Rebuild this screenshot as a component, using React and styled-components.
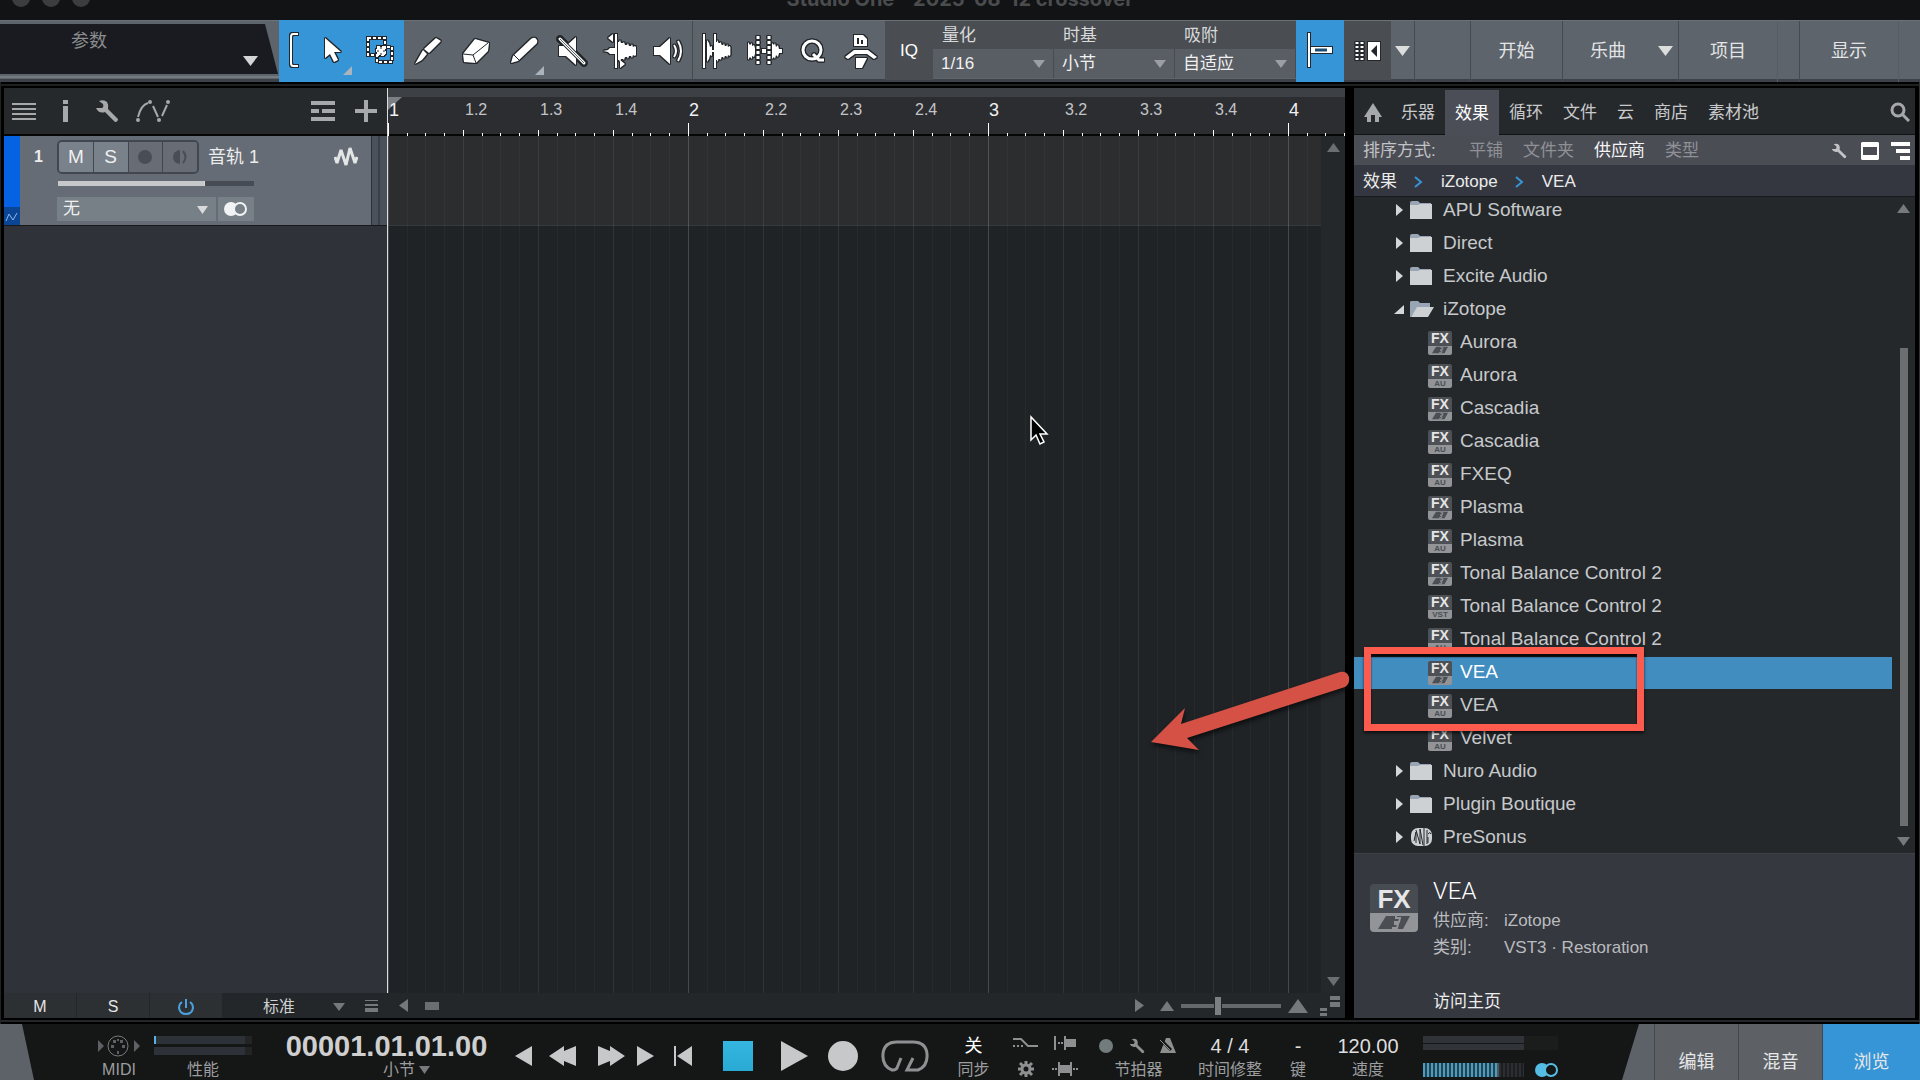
import React from "react";
import styled, { createGlobalStyle, css } from "styled-components";

const blue = "#3595d6";

const GlobalStyle = createGlobalStyle`
  * { box-sizing: border-box; }
  body {
    margin: 0;
    background: #0b0c0d;
    color: #d2d3d5;
    font: 17px/20px "Liberation Sans", "Noto Sans CJK SC", sans-serif;
    overflow: hidden;
  }
  button, select, input {
    font: inherit;
    color: inherit;
    margin: 0;
    padding: 0;
    border: 0;
    border-radius: 0;
    background: none;
    appearance: none;
    outline: none;
  }
  a { color: inherit; text-decoration: none; }
  ul, dl, dd { margin: 0; padding: 0; list-style: none; }
  svg { display: block; flex: none; }
`;

const Window = styled.div`
  display: flex;
  flex-direction: column;
  height: 100vh;
`;

/* ---------- title bar ---------- */
const TitleBar = styled.header`
  display: flex;
  height: 20px;
  flex: none;
  background: #121315;
  overflow: hidden;
  position: relative;
`;
const Lights = styled.div`
  display: flex;
  gap: 12px;
  padding-left: 12px;
  margin-top: -11px;
`;
const Light = styled.span`
  width: 18px;
  height: 18px;
  border-radius: 50%;
  background: #3c3d3f;
`;
const Title = styled.h1`
  position: absolute;
  left: 50%;
  top: -13px;
  transform: translateX(-50%);
  margin: 0;
  font: 700 20px/24px Inter, sans-serif;
  color: #4b4c4e;
  white-space: nowrap;
`;

/* ---------- toolbar ---------- */
const Toolbar = styled.div`
  display: flex;
  height: 62px;
  flex: none;
  background: linear-gradient(#5d646b 58px, #3d4248 58px);
  border-top: 1px solid #6b7176;
`;
const ParamBox = styled.div`
  width: 279px;
  height: 57px;
  padding: 3px 0 2px;
  border-bottom: 2px solid #757b81;
  flex: none;
`;
const ParamScreen = styled.button`
  position: relative;
  display: block;
  width: 278px;
  height: 50px;
  padding: 0 0 16px 71px;
  text-align: left;
  font-size: 18px;
  color: #8b8c8e;
  background: #191b20;
  clip-path: polygon(0 0, 265px 0, 278px 100%, 0 100%);
`;
const ParamCaret = styled.span`
  position: absolute;
  right: 20px;
  bottom: 8px;
`;
const Tool = styled.button`
  position: relative;
  width: ${(p) => p.$w || 48}px;
  height: ${(p) => (p.$on ? 62 : 59)}px;
  padding-bottom: ${(p) => (p.$on ? 2 : 0)}px;
  margin-top: ${(p) => (p.$on ? -1 : 0)}px;
  display: flex;
  align-items: center;
  justify-content: center;
  flex: none;
  background: ${(p) => (p.$on ? blue : p.$dark ? "#4a4e52" : "none")};
  color: #fff;
  > svg:first-child {
    filter: drop-shadow(1px 0 0 #23272b) drop-shadow(-1px 0 0 #23272b)
      drop-shadow(0 1px 0 #23272b) drop-shadow(0 -1px 0 #23272b);
  }
`;
const Corner = styled.span`
  position: absolute;
  right: 4px;
  bottom: ${(p) => (p.$on ? 7 : 5)}px;
  width: 9px;
  height: 9px;
  background: #a9b4bd;
  clip-path: polygon(100% 0, 100% 100%, 0 100%);
`;
const Divider = styled.span`
  width: 1px;
  height: 61px;
  flex: none;
  background: #454a50;
`;
const Field = styled.label`
  position: relative;
  flex: none;
  width: 121px;
  height: 57px;
  display: flex;
  flex-direction: column;
  background: #4a4e52;
  color: #d8d9da;
`;
const FieldName = styled.span`
  height: 28px;
  padding: 5px 0 0 9px;
`;
const FieldSelect = styled.select`
  height: 29px;
  padding-left: 8px;
  padding-top: 1px;
  background: #595d64;
  border-right: 1px solid #484c52;
  color: #f1f1f2;
`;
const FieldCaret = styled.span`
  position: absolute;
  right: 9px;
  bottom: 10px;
`;
const Filler = styled.span`
  flex: 1;
`;
const PageButton = styled.button`
  width: ${(p) => p.$w}px;
  height: 60px;
  flex: none;
  font-size: 18px;
  color: #e3e4e5;
  display: flex;
  align-items: center;
  justify-content: center;
`;
const Gap = styled.span`
  width: ${(p) => p.$w}px;
  height: 61px;
  flex: none;
  border-left: 1px solid #565d64;
`;

/* ---------- workspace ---------- */
const Workspace = styled.main`
  flex: 1;
  min-height: 0;
  display: flex;
  gap: 9px;
  padding: 6px 4px 6px 3px;
  border-left: 1px solid #202224;
  border-right: 1px solid #303234;
  background: linear-gradient(#000 2px, #1d1f21 2px 4px, #000 4px, #000 calc(100% - 4px), #24272a calc(100% - 4px), #24272a calc(100% - 2px), #000 calc(100% - 2px));
`;
const Arrange = styled.section`
  flex: 1;
  min-width: 0;
  display: flex;
  flex-direction: column;
`;
const ArrangeBody = styled.div`
  flex: 1;
  min-height: 0;
  display: flex;
`;
const TrackColumn = styled.div`
  width: 383px;
  flex: none;
  background: #2f3238;
`;
const TrackHeader = styled.div`
  display: flex;
  align-items: center;
  height: 48px;
  padding: 0 0 0 8px;
  background: #26292c;
  border-bottom: 2px solid #060607;
  color: #a6a8aa;
`;
const IconButton = styled.button`
  display: flex;
  align-items: center;
  justify-content: center;
  flex: none;
  width: ${(p) => p.$w}px;
  height: ${(p) => p.$h || 24}px;
`;
const Track = styled.div`
  display: flex;
  height: 90px;
  background: #656c75;
  border-bottom: 1px solid #17191b;
`;
const TrackColor = styled.div`
  width: 16px;
  background: linear-gradient(#0562e2 71px, #0b4596 71px);
  display: flex;
  align-items: flex-end;
  padding: 0 0 3px 1px;
`;
const TrackNumber = styled.span`
  width: 37px;
  padding-top: 11px;
  text-align: center;
  font-weight: 700;
  font-size: 16px;
  color: #ececed;
`;
const TrackBody = styled.div`
  flex: 1;
  padding-top: 4px;
`;
const TrackTop = styled.div`
  display: flex;
  align-items: center;
  height: 34px;
`;
const Toggles = styled.div`
  display: flex;
  width: 142px;
  height: 34px;
  border: 2px solid #42474f;
  border-radius: 5px;
  overflow: hidden;
`;
const Toggle = styled.button`
  flex: 1;
  display: flex;
  align-items: center;
  justify-content: center;
  font-size: 19px;
  color: #eff0f1;
  background: ${(p) => (p.$dim ? "#686d75" : "#79818a")};
  & + & { border-left: 1px solid #42474f; }
`;
const TrackName = styled.span`
  margin-left: 9px;
  flex: 1;
  font-size: 18px;
  color: #ececed;
`;
const Volume = styled.input`
  display: block;
  width: 196px;
  height: 5px;
  margin: 7px 0 11px 1px;
  background: linear-gradient(90deg, #c6c8ca 75%, #464b54 75%);
  &::-webkit-slider-thumb { appearance: none; width: 1px; height: 5px; background: #d6d7d8; }
`;
const TrackInputs = styled.div`
  display: flex;
  gap: 2px;
`;
const InputField = styled.label`
  position: relative;
  display: flex;
  width: 159px;
  height: 24px;
`;
const InputSelect = styled.select`
  flex: 1;
  padding-left: 6px;
  background: #777f87;
  color: #f0f0f1;
`;
const InputCaret = styled.span`
  position: absolute;
  right: 8px;
  top: 9px;
`;
const StereoButton = styled.button`
  width: 36px;
  height: 24px;
  display: flex;
  align-items: center;
  justify-content: center;
  background: #777f87;
`;
const TrackMeter = styled.span`
  width: 16px;
  background: linear-gradient(90deg, #2c3139 1px, #4a515b 1px, #4a515b 7px, #39404a 7px, #39404a 9px, #4a515b 9px);
`;

/* ---------- timeline ---------- */
const Timeline = styled.div`
  flex: 1;
  min-width: 0;
  display: flex;
  flex-direction: column;
  border-left: 1px solid #dcdddd;
  background: #25282b;
`;
const Ruler = styled.div`
  position: relative;
  display: flex;
  flex: none;
  height: 48px;
  overflow: hidden;
  border-top: 9px solid #3d4146;
  background: #2c2d31;
`;
const StartFlag = styled.span`
  position: absolute;
  left: 0;
  top: 0;
  width: 14px;
  height: 13px;
  background: #7d8085;
  clip-path: polygon(0 0, 100% 0, 0 100%);
`;
const Beat = styled.span`
  position: relative;
  width: 75px;
  flex: none;
  padding: 3px 0 0 ${(p) => (p.$bar ? 1 : 2)}px;
  font-size: ${(p) => (p.$bar ? 18 : 16)}px;
  color: ${(p) => (p.$bar ? "#f0f0f1" : "#c3c4c6")};
  background:
    linear-gradient(#fff, #fff) 0 100% / 1px ${(p) => (p.$bar ? 13 : 6)}px no-repeat,
    linear-gradient(#fff, #fff) 19px 100% / 1px 3px no-repeat,
    linear-gradient(#fff, #fff) 37px 100% / 1px 3px no-repeat,
    linear-gradient(#fff, #fff) 56px 100% / 1px 3px no-repeat,
    linear-gradient(#060607, #060607) 0 100% / 100% 2px no-repeat;
`;
const Canvas = styled.div`
  flex: 1;
  min-height: 0;
  display: flex;
`;
const Lanes = styled.div`
  position: relative;
  flex: 1;
  background:
    linear-gradient(90deg, #ffffff1a 1px, transparent 1px) 0 0 / 300px 100%,
    linear-gradient(90deg, #ffffff14 1px, transparent 1px, transparent 19px, #ffffff08 19px, #ffffff08 20px, transparent 20px, transparent 37px, #ffffff08 37px, #ffffff08 38px, transparent 38px, transparent 56px, #ffffff08 56px, #ffffff08 57px, transparent 57px) 0 0 / 75px 100%,
    linear-gradient(#2c2d2f 89px, #36393b 89px, #36393b 90px, #1f2326 90px);
`;
const Pointer = styled.span`
  position: absolute;
  left: 641px;
  top: 279px;
`;
const ScrollRail = styled.div`
  width: 24px;
  display: flex;
  flex-direction: column;
  justify-content: space-between;
  align-items: center;
  padding: 7px 0;
  background: #25282b;
  color: #6c6f72;
`;
const ArrangeFooter = styled.div`
  display: flex;
  align-items: center;
  flex: none;
  height: 25px;
  background: #24272a;
  color: #76797c;
`;
const FooterButton = styled.button`
  width: 72px;
  height: 25px;
  padding-top: 2px;
  margin-right: 1px;
  display: flex;
  align-items: center;
  justify-content: center;
  font-size: 16px;
  color: #e4e4e5;
  background: #2d3033;
`;
const ModeField = styled.label`
  position: relative;
  display: flex;
  margin-left: 40px;
  width: 86px;
  padding-top: 2px;
`;
const ModeSelect = styled.select`
  flex: 1;
  font-size: 16px;
  color: #cfd0d2;
`;
const ModeCaret = styled.span`
  position: absolute;
  right: 4px;
  top: 8px;
`;
const HScrollThumb = styled.span`
  width: 14px;
  height: 8px;
  background: #6b6e71;
  margin-left: 12px;
`;
const ZoomSlider = styled.input`
  width: 100px;
  height: 18px;
  background: linear-gradient(#66696c, #66696c) 0 50% / 100% 4px no-repeat;
  &::-webkit-slider-thumb {
    appearance: none;
    width: 8px;
    height: 18px;
    background: #7c7f82;
    border: solid #24272a;
    border-width: 0 1px;
  }
`;

/* ---------- browser ---------- */
const Browser = styled.aside`
  position: relative;
  width: 561px;
  flex: none;
  display: flex;
  flex-direction: column;
  background: #24282b;
`;
const TabBar = styled.nav`
  display: flex;
  align-items: stretch;
  height: 47px;
  flex: none;
  padding: 2px 5px 0 3px;
  background: #26292c;
  border-bottom: 1px solid #111214;
  color: #a6a8aa;
`;
const Tab = styled.button`
  padding: 2px 10px 0;
  color: ${(p) => (p.$on ? "#fff" : "#c9cacc")};
  background: ${(p) => (p.$on ? "#4c4e57" : "none")};
  margin-bottom: ${(p) => (p.$on ? -1 : 0)}px;
  display: flex;
  align-items: center;
  justify-content: center;
`;
const SortBar = styled.div`
  display: flex;
  align-items: center;
  height: 30px;
  flex: none;
  padding: 1px 0 0 9px;
  background: #4b4d55;
  color: #c2c3c6;
`;
const SortLabel = styled.span`
  width: 96px;
`;
const SortButton = styled.button`
  padding: 0 10px;
  color: ${(p) => (p.$on ? "#f4f4f5" : "#8f9197")};
`;
const Crumbs = styled.nav`
  display: flex;
  align-items: center;
  gap: 16px;
  height: 32px;
  flex: none;
  padding: 2px 0 0 9px;
  background: #34373f;
  border-bottom: 1px solid #181a1d;
  color: #ebebec;
`;
const Chevron = styled.span`
  display: flex;
  width: 12px;
  color: ${blue};
`;
const TreeArea = styled.div`
  position: relative;
  flex: 1;
  min-height: 0;
  display: flex;
  overflow: hidden;
`;
const Tree = styled.ul`
  flex: 1;
  margin-top: -3px;
`;
const Row = styled.button`
  display: flex;
  align-items: center;
  width: 100%;
  height: 33px;
  padding-bottom: 2px;
  padding-left: ${(p) => (p.$child ? 74 : 40)}px;
  border-top: 1px solid transparent;
  background: ${(p) => (p.$on ? "#418dc0" : "none")};
  background-clip: padding-box;
  font-size: 19px;
  text-align: left;
  color: ${(p) => (p.$on ? "#fff" : "#c7c9cb")};
`;
const RowText = styled.span`
  margin-left: ${(p) => (p.$child ? 8 : 9)}px;
`;
const TreeScroll = styled.div`
  width: 23px;
  display: flex;
  flex-direction: column;
  align-items: center;
  padding: 7px 0;
  gap: 11px;
  color: #77797c;
`;
const TreeThumb = styled.span`
  width: 8px;
  flex: 1;
  margin-top: 124px;
  background: #6c6e70;
`;
const Highlight = styled.span`
  position: absolute;
  left: 10px;
  top: 450px;
  width: 280px;
  height: 84px;
  border: 7px solid #fd5b4d;
  box-shadow: 0 2px 3px #000a, inset 0 3px 2px #000c;
  pointer-events: none;
`;
const ArrowNote = styled.span`
  position: absolute;
  left: -214px;
  top: 572px;
  pointer-events: none;
  filter: drop-shadow(1px 3px 2px #0009);
`;
const Badge = styled.span`
  display: flex;
  flex-direction: column;
  flex: none;
  width: ${(p) => (p.$big ? 48 : 24)}px;
  height: ${(p) => (p.$big ? 48 : 24)}px;
  margin-top: ${(p) => (p.$big ? 0 : 1)}px;
  border-radius: ${(p) => (p.$big ? 4 : 2)}px;
  overflow: hidden;
  text-align: center;
  font-weight: 700;
`;
const BadgeTop = styled.span`
  flex: none;
  height: ${(p) => (p.$big ? 29 : 15)}px;
  background: ${(p) => (p.$big ? "#474b52" : "#4d5054")};
  color: #e6e6e7;
  font-size: ${(p) => (p.$big ? 26 : 14)}px;
  line-height: ${(p) => (p.$big ? 31 : 15)}px;
`;
const BadgeBottom = styled.span`
  flex: 1;
  display: flex;
  align-items: center;
  justify-content: center;
  background: #929498;
  color: #4b4e53;
  font-size: 8px;
  line-height: 9px;
`;
const Info = styled.div`
  display: flex;
  align-items: flex-start;
  gap: 15px;
  height: 165px;
  flex: none;
  padding: 30px 0 0 16px;
  background: #35383f;
  border-top: 1px solid #3d4047;
`;
const InfoTitle = styled.h2`
  margin: -6px 0 7px;
  font: 300 24px/26px Roboto, "Liberation Sans", sans-serif;
  color: #fff;
`;
const Facts = styled.dl`
  display: grid;
  grid-template-columns: 71px auto;
  row-gap: 7px;
  margin-bottom: 34px;
  color: #babbbe;
`;
const HomeLink = styled.a`
  color: #ececed;
`;

/* ---------- transport ---------- */
const Transport = styled.footer`
  display: flex;
  flex: none;
  height: 56px;
  background: #151616;
  color: #c9cacb;
`;
const LeftWedge = styled.span`
  width: 34px;
  flex: none;
  background: #5d6268;
  clip-path: polygon(0 0, 22px 0, 100% 100%, 0 100%);
`;
const Cell = styled.div`
  display: flex;
  flex-direction: column;
  align-items: center;
  flex: none;
  width: ${(p) => p.$w}px;
  margin-left: ${(p) => p.$ml || 0}px;
  padding-top: 7px;
`;
const CellTop = styled.div`
  height: 31px;
  width: 100%;
  display: flex;
  align-items: center;
  justify-content: center;
  font-size: ${(p) => (p.$size ? p.$size : 20)}px;
  font-weight: ${(p) => (p.$bold ? 700 : 400)};
  color: ${(p) => p.$color || "#dededf"};
`;
const CellLabel = styled.span`
  display: flex;
  align-items: center;
  gap: 4px;
  font-size: 16px;
  line-height: 20px;
  color: #9c9d9f;
  white-space: nowrap;
  padding-left: ${(p) => (p.$shift ? 40 : 0)}px;
`;
const Meters = styled.div`
  width: 98px;
  display: grid;
  gap: 3px;
`;
const Meter = styled.span`
  height: 8px;
  background: linear-gradient(90deg, ${(p) => (p.$on ? "#58b2df" : "#2d3238")} 2px, #2d3238 2px, #2d3238 91px, #232424 91px);
`;
const TransportButton = styled.button`
  display: flex;
  align-items: center;
  justify-content: center;
  flex: none;
  height: 56px;
  width: ${(p) => p.$w}px;
  padding-top: 8px;
  color: #c7c8c9;
  ${(p) => p.$loop && css`color: #8f9091;`}
`;
const StopSquare = styled.span`
  width: 30px;
  height: 30px;
  background: linear-gradient(#35b6e0, #29aad4);
`;
const IconGrid = styled.div`
  display: grid;
  grid-template-columns: 39px 39px;
  grid-template-rows: 24px 28px;
  justify-content: center;
  place-items: center;
  width: 90px;
  flex: none;
  padding-top: 7px;
  color: #8d8f91;
`;
const Trio = styled.div`
  display: grid;
  grid-template-columns: repeat(3, 31px);
  place-items: center;
  height: 31px;
  margin-right: 4px;
  color: #8d8f91;
`;
const Output = styled.div`
  display: flex;
  flex-direction: column;
  gap: 12px;
  width: 135px;
  flex: none;
  margin-left: 10px;
  padding-top: 12px;
`;
const OutputMeter = styled.span`
  height: 14px;
  background: linear-gradient(#151616, #151616) 0 50% / 101px 1px no-repeat, linear-gradient(90deg, #303338 101px, #1b1c1c 101px);
`;
const OutputRow = styled.div`
  display: flex;
  align-items: center;
  gap: 10px;
`;
const OutputLevel = styled.input`
  width: 101px;
  height: 14px;
  background:
    repeating-linear-gradient(90deg, transparent 0 2px, #151616aa 2px 4px),
    linear-gradient(90deg, #4a9cc0 74px, #b9dbe8 74px, #b9dbe8 76px, #2b2e32 76px);
  &::-webkit-slider-thumb { appearance: none; width: 1px; height: 14px; background: transparent; }
`;
const RightWedge = styled.span`
  width: 32px;
  flex: none;
  margin-left: auto;
  background: #5d6268;
  clip-path: polygon(17px 0, 100% 0, 100% 100%, 0 100%);
`;
const ViewButton = styled.button`
  width: ${(p) => (p.$on ? 98 : 84)}px;
  flex: none;
  padding-top: 20px;
  border-left: 1px solid #43474b;
  font-size: 18px;
  color: #e6e7e8;
  background: ${(p) => (p.$on ? blue : "#5d6166")};
`;

/* ---------- drawings ---------- */
const Svg = ({ w, h, children, ...rest }) => (
  <svg width={w} height={h} viewBox={`0 0 ${w} ${h}`} fill="currentColor" aria-hidden="true" {...rest}>
    {children}
  </svg>
);
const shapes = {
  down: (w, h) => `0,0 ${w},0 ${w / 2},${h}`,
  up: (w, h) => `0,${h} ${w},${h} ${w / 2},0`,
  left: (w, h) => `${w},0 ${w},${h} 0,${h / 2}`,
  right: (w, h) => `0,0 ${w},${h / 2} 0,${h}`,
};
const Tri = ({ d = "down", w = 12, h = 9, c = "currentColor" }) => (
  <Svg w={w} h={h}><polygon points={shapes[d](w, h)} fill={c} /></Svg>
);
const line = (sw = 2) => ({ fill: "none", stroke: "currentColor", strokeWidth: sw });

const wave = "M0 -9 L1 -9 2 -11 3 -8 5 -8 6 -9 7 -6 9 -6 10 -8 11 -5 13 -5 14 -7 15 -4 17 -5 18 -4 V4 L17 5 15 4 14 7 13 5 11 5 10 8 9 6 7 6 6 9 5 8 3 8 2 11 1 9 0 9Z";

const toolIcons = {
  bracket: <Svg w={14} h={36}><path d="M11 2H6Q4 2 4 5V31Q4 34 6 34H11" {...line(2)} /></Svg>,
  arrow: <Svg w={22} h={28}><path d="M3 2V22L8 18L12 26L16 24L12 16H19Z" /></Svg>,
  range: (
    <Svg w={30} h={30}>
      <rect x="3" y="3" width="17" height="17" {...line(2)} strokeDasharray="3 2" />
      <rect x="12" y="12" width="15" height="15" {...line(2)} strokeDasharray="3 2" />
      <path d="M12 12H20V20H12Z" />
      <path d="M16 12V14M16 18V20M12 16H14M18 16H20" stroke="#23272b" strokeWidth="1" />
    </Svg>
  ),
  knife: <Svg w={30} h={30}><path d="M2 28L10 14L14 18L9 24ZM11 13L23 2L28 5L16 17Z" /></Svg>,
  eraser: (
    <Svg w={30} h={30}>
      <path d="M2 18L14 3L28 7L27 15L15 27L3 26Z" />
      <path d="M2 18L12 19L27 7M12 19L15 27" fill="none" stroke="#23272b" strokeWidth="1" />
    </Svg>
  ),
  pencil: <Svg w={30} h={30}><path d="M2 27L4 20L22 3Q26 0 28 4Q29 7 26 9L9 25Z" /><path d="M5 19L10 24" stroke="#23272b" /></Svg>,
  mute: (
    <Svg w={30} h={32}>
      <path d="M2 11H9L19 2V30L9 21H2Z" />
      <path d="M3 4L27 28" stroke="#23272b" strokeWidth="5" strokeLinecap="round" />
      <path d="M3 4L27 28" stroke="currentColor" strokeWidth="3" strokeLinecap="round" />
      <path d="M3 4L27 28" stroke="#5d646b" strokeWidth="1" />
    </Svg>
  ),
  split: (
    <Svg w={36} h={38}>
      <path d="M14 2V36" {...line(2)} />
      <path d="M11 2V10L6 6ZM18 36V28L23 32Z" />
      <path d="M1 19L6 18 8 16H13V22H8L6 20Z" />
      <g transform="translate(16 19)"><path d={wave} /></g>
    </Svg>
  ),
  listen: (
    <Svg w={32} h={32}>
      <path d="M2 12H8L18 3V29L8 20H2Z" />
      <path d="M22 10Q26 16 22 22M26 6Q32 16 26 26" {...line(2)} />
    </Svg>
  ),
  bend: (
    <Svg w={32} h={38}>
      <path d="M3 2V36M14 2V36" {...line(2)} />
      <path d="M6 8L8 11 9 15 11 14V24L9 23 8 27 6 30Z" />
      <path d="M11 18H16V20H11Z" />
      <g transform="translate(15 19) scale(0.8 1)"><path d={wave} /></g>
    </Svg>
  ),
  slice: (
    <Svg w={38} h={34}>
      <path d="M2 8L4 11 6 9V12L8 11 9 14V20L8 23 6 22V25L4 23 2 26ZM16 15H20V19H16Z" />
      <path d="M12 2V32M23 2V32" {...line(3)} strokeDasharray="3 2" />
      <path d="M26 9L28 11 29 9 30 13 32 11 33 15 36 15V19L33 19 32 23 30 21 29 25 28 23 26 25Z" />
    </Svg>
  ),
  quant: (
    <Svg w={28} h={30}>
      <ellipse cx="13" cy="14" rx="9" ry="9" {...line(3)} />
      <path d="M14 18L20 24H25" {...line(3)} />
    </Svg>
  ),
  macro: (
    <Svg w={38} h={38}>
      <path d="M12 14V3H21L25 7V14Z" />
      <path d="M16 12V6M20 12V8" stroke="#23272b" strokeWidth="2" />
      <path d="M3 25L12 18H26L35 25L32 27L25 22H13L6 27Z" />
      <path d="M14 26H25L20 36H14Z" />
    </Svg>
  ),
  snap: (
    <Svg w={30} h={38}>
      <rect x="3" y="2" width="2" height="34" />
      <path d="M6 16H27V22H6Z" />
      <path d="M10 19H22" stroke="#1b4d70" strokeWidth="3" />
    </Svg>
  ),
  scroll: (
    <Svg w={30} h={24}>
      <path d="M4 3V21M9 3V21" {...line(3)} strokeDasharray="2 2" />
      <rect x="15" y="3" width="12" height="18" />
      <path d="M24 6V18L18 12Z" fill="#23272b" />
    </Svg>
  ),
};

const Wrench = ({ s = 24 }) => (
  <svg width={s} height={s} viewBox="0 0 24 24" fill="currentColor" aria-hidden="true">
    <path d="M4 2Q9 0 12 3Q14 6 13 10L23 20Q23 23 20 23L10 13Q4 15 1 9L7 9Q9 8 8 5Z" />
  </svg>
);
const Rings = ({ c = "#f2f3f4", hole = "#777f87" }) => (
  <Svg w={26} h={16}>
    <circle cx="8" cy="8" r="7" fill={c} />
    <circle cx="17" cy="8" r="6" fill={hole} stroke={c} strokeWidth="2" />
  </Svg>
);
const Folder = () => (
  <Svg w={23} h={18}>
    <path d="M0 2Q0 0 2 0H8L10 2H21V5H0Z" fill="#98a5b5" />
    <path d="M0 4H8L10 3H22V18H0Z" fill="#cdd1d4" />
  </Svg>
);
const OpenFolder = () => (
  <Svg w={24} h={16}>
    <path d="M0 1Q0 0 2 0H8L10 2H20V6H8L1 16H0Z" fill="#98a5b5" />
    <path d="M7 6H24L18 16H1Z" fill="#cdd1d4" />
  </Svg>
);
const PreSonusMark = () => (
  <Svg w={23} h={18}>
    <rect x="1" y="0" width="21" height="18" rx="7" fill="#cdd1d4" />
    <path d="M4 13L6 4V15M6 2L10 16V1L13 17M14 0V18M17 2V16M18 6Q20 3 21 6M18 9V15" fill="none" stroke="#24282b" strokeWidth="1" />
  </Svg>
);
const VstMark = ({ big }) => (
  <svg width={big ? 32 : 16} height={big ? 15 : 8} viewBox="0 0 32 15" aria-hidden="true">
    <path d="M8 1H32L25 14H0Z" fill="#4b4e53" />
    <path d="M18 1V3H22L21 7H17V9H20L19 13H14" fill="none" stroke="#929498" strokeWidth="2" />
  </svg>
);

const FxBadge = ({ kind, big }) => (
  <Badge $big={big}>
    <BadgeTop $big={big}>FX</BadgeTop>
    <BadgeBottom>{kind === "vst3" ? <VstMark big={big} /> : kind}</BadgeBottom>
  </Badge>
);

const tools = [
  { id: "knife", name: "分割" },
  { id: "eraser", name: "擦除" },
  { id: "pencil", name: "绘制", more: true },
  { id: "mute", name: "静音" },
  { id: "split", name: "弯曲" },
  { id: "listen", name: "试听" },
];
const tools2 = [
  { id: "bend", name: "音频弯曲" },
  { id: "slice", name: "切片" },
  { id: "quant", name: "量化面板" },
  { id: "macro", name: "宏" },
];
const fields = [
  ["量化", "1/16"],
  ["时基", "小节"],
  ["吸附", "自适应"],
];
const beats = Array.from({ length: 13 }, (_, i) => {
  const bar = Math.floor(i / 4) + 1;
  return i % 4 ? `${bar}.${(i % 4) + 1}` : `${bar}`;
});
const tree = [
  { name: "APU Software" },
  { name: "Direct" },
  { name: "Excite Audio" },
  { name: "iZotope", open: true },
  { name: "Aurora", fx: "vst3" },
  { name: "Aurora", fx: "AU" },
  { name: "Cascadia", fx: "vst3" },
  { name: "Cascadia", fx: "AU" },
  { name: "FXEQ", fx: "AU" },
  { name: "Plasma", fx: "vst3" },
  { name: "Plasma", fx: "AU" },
  { name: "Tonal Balance Control 2", fx: "vst3" },
  { name: "Tonal Balance Control 2", fx: "VST" },
  { name: "Tonal Balance Control 2", fx: "AU" },
  { name: "VEA", fx: "vst3", on: true },
  { name: "VEA", fx: "AU" },
  { name: "Velvet", fx: "AU" },
  { name: "Nuro Audio" },
  { name: "Plugin Boutique" },
  { name: "PreSonus", brand: true },
];

const TwistySlot = styled.span`
  width: 10px;
  margin-right: 6px;
  display: flex;
  justify-content: ${(p) => (p.$open ? "flex-start" : "center")};
  color: #d5d6d8;
`;
const IconSlot = styled.span`
  width: 24px;
`;

function TreeRow({ item }) {
  if (item.fx) {
    return (
      <li>
        <Row $child $on={item.on}>
          <FxBadge kind={item.fx} />
          <RowText $child>{item.name}</RowText>
        </Row>
      </li>
    );
  }
  return (
    <li>
      <Row>
        <TwistySlot $open={item.open}>
          {item.open ? <Svg w={10} h={9}><path d="M10 0V9H0Z" /></Svg> : <Tri d="right" w={7} h={12} />}
        </TwistySlot>
        <IconSlot>{item.open ? <OpenFolder /> : item.brand ? <PreSonusMark /> : <Folder />}</IconSlot>
        <RowText>{item.name}</RowText>
      </Row>
    </li>
  );
}

function TopToolbar() {
  return (
    <Toolbar>
      <ParamBox>
        <ParamScreen>
          参数
          <ParamCaret><Tri w={15} h={10} c="#d4d5d6" /></ParamCaret>
        </ParamScreen>
      </ParamBox>
      <Tool $on $w={30} aria-label="工具组">{toolIcons.bracket}</Tool>
      <Tool $on $w={47} aria-label="箭头">{toolIcons.arrow}<Corner $on /></Tool>
      <Tool $on aria-label="范围">{toolIcons.range}</Tool>
      {tools.map((t) => (
        <Tool key={t.id} aria-label={t.name}>{toolIcons[t.id]}{t.more && <Corner />}</Tool>
      ))}
      <Divider />
      {tools2.map((t) => (
        <Tool key={t.id} aria-label={t.name}>{toolIcons[t.id]}</Tool>
      ))}
      <Tool $dark>IQ</Tool>
      {fields.map(([name, value]) => (
        <Field key={name}>
          <FieldName>{name}</FieldName>
          <FieldSelect><option>{value}</option></FieldSelect>
          <FieldCaret><Tri w={12} h={8} c="#9b9ea2" /></FieldCaret>
        </Field>
      ))}
      <Tool $on aria-label="吸附开关">{toolIcons.snap}</Tool>
      <Tool $dark $w={47} aria-label="自动滚动">{toolIcons.scroll}</Tool>
      <PageButton $w={23} aria-label="更多"><Tri w={15} h={10} c="#dcdddd" /></PageButton>
      <Divider />
      <Filler />
      <Divider />
      <PageButton $w={91}>开始</PageButton>
      <Divider />
      <PageButton $w={90}>乐曲</PageButton>
      <PageButton $w={25} aria-label="乐曲列表"><Tri w={15} h={10} c="#dcdddd" /></PageButton>
      <Divider />
      <PageButton $w={98}>项目</PageButton>
      <Gap $w={22} />
      <Divider />
      <PageButton $w={98}>显示</PageButton>
      <Gap $w={22} />
    </Toolbar>
  );
}

function Tracks() {
  return (
    <TrackColumn>
      <TrackHeader>
        <IconButton $w={24} aria-label="列表">
          <Svg w={24} h={17}><path d="M0 0H24V2H0ZM0 5H24V7H0ZM0 10H24V12H0ZM0 15H24V17H0Z" /></Svg>
        </IconButton>
        <IconButton $w={58} aria-label="检查器">
          <Svg w={5} h={22}><path d="M0 0H5V4H0ZM0 6H5V22H0Z" /></Svg>
        </IconButton>
        <IconButton $w={26} aria-label="设置"><Wrench s={24} /></IconButton>
        <IconButton $w={66} aria-label="自动化">
          <Svg w={36} h={24}>
            <path d="M3 18Q6 6 13 4M18 7L23 18M27 17L32 6" {...line(2)} />
            <circle cx="3" cy="21" r="2" /><circle cx="15" cy="3" r="2" /><circle cx="24" cy="21" r="2" /><circle cx="33" cy="3" r="2" />
          </Svg>
        </IconButton>
        <Filler />
        <IconButton $w={42} aria-label="轨道高度">
          <Svg w={24} h={20}><path d="M0 0H24V4H0ZM0 8H8V12H0ZM11 8H24V12H11ZM0 16H24V20H0Z" /></Svg>
        </IconButton>
        <IconButton $w={43} aria-label="添加轨道">
          <Svg w={22} h={22}><path d="M9 0H13V9H22V13H13V22H9V13H0V9H9Z" /></Svg>
        </IconButton>
      </TrackHeader>
      <Track>
        <TrackColor>
          <Svg w={13} h={10}><path d="M1 9L4 2L8 8L12 1" fill="none" stroke="#8db6ea" strokeWidth="1" /></Svg>
        </TrackColor>
        <TrackNumber>1</TrackNumber>
        <TrackBody>
          <TrackTop>
            <Toggles>
              <Toggle>M</Toggle>
              <Toggle>S</Toggle>
              <Toggle $dim aria-label="录音"><Svg w={14} h={14}><circle cx="7" cy="7" r="7" fill="#494e56" /></Svg></Toggle>
              <Toggle $dim aria-label="监听">
                <Svg w={14} h={14}><path d="M7 0V14Q0 13 0 7Q0 1 7 0Z" fill="#494e56" /><path d="M10 1Q15 7 10 13" fill="none" stroke="#494e56" strokeWidth="2" /></Svg>
              </Toggle>
            </Toggles>
            <TrackName>音轨 1</TrackName>
            <IconButton $w={50} aria-label="波形">
              <Svg w={24} h={20}>
                <path d="M1 10L3 16L7 3L12 18L16 1L21 16L23 10" fill="none" stroke="#e4e5e6" strokeWidth="3" strokeLinejoin="bevel" />
              </Svg>
            </IconButton>
          </TrackTop>
          <Volume type="range" defaultValue={75} aria-label="音量" />
          <TrackInputs>
            <InputField>
              <InputSelect aria-label="输入"><option>无</option></InputSelect>
              <InputCaret><Tri w={11} h={8} c="#d9dadb" /></InputCaret>
            </InputField>
            <StereoButton aria-label="立体声"><Rings /></StereoButton>
          </TrackInputs>
        </TrackBody>
        <TrackMeter />
      </Track>
    </TrackColumn>
  );
}

function ArrangeView() {
  return (
    <Arrange>
      <ArrangeBody>
        <Tracks />
        <Timeline>
          <Ruler>
            <StartFlag />
            {beats.map((b) => <Beat key={b} $bar={b.length === 1}>{b}</Beat>)}
          </Ruler>
          <Canvas>
            <Lanes>
              <Pointer>
                <Svg w={22} h={30}><path d="M2 2V25L7 20L11 29L15 27L11 19H18Z" fill="#000" stroke="#fff" strokeWidth="1.5" /></Svg>
              </Pointer>
            </Lanes>
            <ScrollRail>
              <Tri d="up" w={13} h={9} />
              <Tri w={13} h={9} />
            </ScrollRail>
          </Canvas>
        </Timeline>
      </ArrangeBody>
      <ArrangeFooter>
        <FooterButton>M</FooterButton>
        <FooterButton>S</FooterButton>
        <FooterButton aria-label="启用">
          <Svg w={16} h={16} color="#4a9fdd"><path d="M4 3Q1 5 1 9Q2 15 8 15Q14 15 15 9Q15 5 12 3M8 0V9" {...line(2)} /></Svg>
        </FooterButton>
        <ModeField>
          <ModeSelect aria-label="模式"><option>标准</option></ModeSelect>
          <ModeCaret><Tri w={12} h={8} /></ModeCaret>
        </ModeField>
        <IconButton $w={44} aria-label="列表视图">
          <Svg w={13} h={12}><path d="M0 0H13V1H0ZM0 4H13V6H0ZM0 8H13V12H0Z" /></Svg>
        </IconButton>
        <IconButton $w={20} aria-label="向左"><Tri d="left" w={9} h={13} /></IconButton>
        <HScrollThumb />
        <Filler />
        <IconButton $w={27} aria-label="向右"><Tri d="right" w={9} h={13} /></IconButton>
        <IconButton $w={28} aria-label="缩小"><Tri d="up" w={14} h={10} /></IconButton>
        <ZoomSlider type="range" defaultValue={36} aria-label="缩放" />
        <IconButton $w={34} aria-label="放大"><Tri d="up" w={20} h={14} /></IconButton>
        <IconButton $w={30} aria-label="轨道缩放">
          <Svg w={20} h={20}><path d="M10 0H20V4H10ZM10 6H20V11H10ZM0 12H7V15H0ZM0 17H7V20H0Z" /></Svg>
        </IconButton>
      </ArrangeFooter>
    </Arrange>
  );
}

function BrowserPanel() {
  return (
    <Browser>
      <TabBar>
        <IconButton $w={32} $h={44} aria-label="主页"><Svg w={18} h={19}><path d="M9 0L18 14H15V19H11V12H7V19H3V14H0Z" /></Svg></IconButton>
        <TabGroup>
          {["乐器", "效果", "循环", "文件", "云", "商店", "素材池"].map((t) => (
            <Tab key={t} $on={t === "效果"}>{t}</Tab>
          ))}
        </TabGroup>
        <Filler />
        <IconButton $w={20} $h={44} aria-label="搜索">
          <Svg w={20} h={20}><circle cx="8" cy="8" r="6" {...line(3)} /><path d="M12 12L19 19" {...line(3)} /></Svg>
        </IconButton>
      </TabBar>
      <SortBar>
        <SortLabel>排序方式:</SortLabel>
        {["平铺", "文件夹", "供应商", "类型"].map((t) => (
          <SortButton key={t} $on={t === "供应商"}>{t}</SortButton>
        ))}
        <Filler />
        <IconButton $w={30} aria-label="选项"><Wrench s={16} /></IconButton>
        <IconButton $w={32} aria-label="缩略图">
          <Svg w={18} h={18}><path fillRule="evenodd" d="M1 0H17L18 1V17L17 18H1L0 17V1ZM2 5V13H16V5Z" fill="#fff" /></Svg>
        </IconButton>
        <IconButton $w={29} aria-label="树形">
          <Svg w={19} h={18}><path d="M0 0H19V4H0ZM5 7H19V11H5ZM9 14H19V18H9Z" fill="#fff" /></Svg>
        </IconButton>
      </SortBar>
      <Crumbs>
        <a href="#effects">效果</a>
        <Chevron><Svg w={10} h={12}><path d="M2 1L8 6L2 11" {...line(2)} /></Svg></Chevron>
        <a href="#izotope">iZotope</a>
        <Chevron><Svg w={10} h={12}><path d="M2 1L8 6L2 11" {...line(2)} /></Svg></Chevron>
        <a href="#vea">VEA</a>
      </Crumbs>
      <TreeArea>
        <Tree>{tree.map((item, i) => <TreeRow key={i} item={item} />)}</Tree>
        <TreeScroll>
          <Tri d="up" w={13} h={9} />
          <TreeThumb />
          <Tri w={13} h={9} />
        </TreeScroll>
        <Highlight />
      </TreeArea>
      <Info>
        <FxBadge kind="vst3" big />
        <div>
          <InfoTitle>VEA</InfoTitle>
          <Facts>
            <dt>供应商:</dt><dd>iZotope</dd>
            <dt>类别:</dt><dd>VST3 · Restoration</dd>
          </Facts>
          <HomeLink href="#home">访问主页</HomeLink>
        </div>
      </Info>
      <ArrowNote>
        <Svg w={220} h={100}>
          <path d="M11 82L45 48L41 64L200 12Q207 11 209 17Q210 24 205 27L47 78L59 90Z" fill="#d65145" />
        </Svg>
      </ArrowNote>
    </Browser>
  );
}

const TabGroup = styled.div`
  display: flex;
  margin-left: 2px;
`;

function TransportBar() {
  return (
    <Transport>
      <LeftWedge />
      <Cell $w={70} $ml={50}>
        <CellTop>
          <Svg w={42} h={22} color="#5c6165">
            <path d="M0 5L6 11L0 17ZM36 5L42 11L36 17Z" />
            <circle cx="20" cy="11" r="10" fill="none" stroke="#77797b" strokeWidth="1" />
            <path d="M13 10H16V13H13ZM24 10H27V13H24ZM15 5H18V8H15ZM22 5H25V8H22ZM19 4H21V6H19ZM19 16H21V19H19Z" />
          </Svg>
        </CellTop>
        <CellLabel>MIDI</CellLabel>
      </Cell>
      <Cell $w={98}>
        <CellTop><Meters><Meter $on /><Meter /></Meters></CellTop>
        <CellLabel>性能</CellLabel>
      </Cell>
      <Cell $w={245} $ml={12}>
        <CellTop $size={29} $bold $color="#cfcfcf">00001.01.01.00</CellTop>
        <CellLabel $shift>小节 <Tri w={11} h={8} c="#77797b" /></CellLabel>
      </Cell>
      <TransportButton $w={28} aria-label="上一个"><Tri d="left" w={17} h={20} /></TransportButton>
      <TransportButton $w={50} aria-label="快退"><Svg w={27} h={20}><path d="M15 0V5L27 0V20L15 15V20L0 10Z" /></Svg></TransportButton>
      <TransportButton $w={48} aria-label="快进"><Svg w={27} h={20}><path d="M12 0L27 10L12 20V15L0 20V0L12 5Z" /></Svg></TransportButton>
      <TransportButton $w={20} aria-label="下一个"><Tri d="right" w={17} h={20} /></TransportButton>
      <TransportButton $w={56} aria-label="回到开头"><Svg w={18} h={20}><path d="M0 0H2V20H0ZM18 0V20L3 10Z" /></Svg></TransportButton>
      <TransportButton $w={54} aria-label="停止"><StopSquare /></TransportButton>
      <TransportButton $w={58} aria-label="播放"><Tri d="right" w={27} h={30} /></TransportButton>
      <TransportButton $w={40} aria-label="录音"><Svg w={30} h={30}><circle cx="15" cy="15" r="15" /></Svg></TransportButton>
      <TransportButton $w={84} $loop aria-label="循环播放">
        <Svg w={48} h={32}><path d="M20 18L16 28Q15 30 11 30Q1 26 2 14Q3 2 16 2H32Q45 2 46 14Q47 26 37 30H26L32 18" {...line(3)} /></Svg>
      </TransportButton>
      <Cell $w={53}>
        <CellTop $size={18} $color="#fff">关</CellTop>
        <CellLabel>同步</CellLabel>
      </Cell>
      <IconGrid>
        <Svg w={26} h={12}><path d="M0 2H8L15 9H25" {...line(2)} /><path d="M0 9H10" {...line(2)} strokeDasharray="2 2" /></Svg>
        <Svg w={22} h={14}><path d="M0 0H2V14H0ZM10 0H12V14H10ZM12 3H22V11H12ZM4 6H6V8H4ZM7 6H9V8H7Z" /></Svg>
        <Svg w={16} h={16}><circle cx="8" cy="8" r="4" {...line(3)} /><path d="M8 0V3M8 13V16M0 8H3M13 8H16M2 2L5 5M11 11L14 14M14 2L11 5M5 11L2 14" {...line(3)} /></Svg>
        <Svg w={26} h={14}><path d="M6 0H8V3H18V0H20V14H18V11H8V14H6ZM0 6H2V8H0ZM3 6H5V8H3ZM21 6H23V8H21ZM24 6H26V8H24Z" /></Svg>
      </IconGrid>
      <Cell $w={97}>
        <Trio>
          <Svg w={14} h={14}><circle cx="7" cy="7" r="7" fill="#727c7c" /></Svg>
          <Wrench s={16} />
          <Svg w={18} h={15}><path d="M7 0H11L17 15H1Z" /><path d="M1 1L12 12" stroke="#151616" strokeWidth="3" /><path d="M1 2L11 12" {...line(1)} /></Svg>
        </Trio>
        <CellLabel>节拍器</CellLabel>
      </Cell>
      <Cell $w={86}><CellTop>4 / 4</CellTop><CellLabel>时间修整</CellLabel></Cell>
      <Cell $w={50}><CellTop>-</CellTop><CellLabel>键</CellLabel></Cell>
      <Cell $w={90}><CellTop>120.00</CellTop><CellLabel>速度</CellLabel></Cell>
      <Output>
        <OutputMeter />
        <OutputRow>
          <OutputLevel type="range" defaultValue={75} aria-label="主输出" />
          <Rings c="#55bde4" hole="#151616" />
        </OutputRow>
      </Output>
      <RightWedge />
      <ViewButton>编辑</ViewButton>
      <ViewButton>混音</ViewButton>
      <ViewButton $on>浏览</ViewButton>
    </Transport>
  );
}

export default function App() {
  return (
    <>
      <GlobalStyle />
      <Window>
        <TitleBar>
          <Lights><Light /><Light /><Light /></Lights>
          <Title>Studio One - 2025-08-12 crossover</Title>
        </TitleBar>
        <TopToolbar />
        <Workspace>
          <ArrangeView />
          <BrowserPanel />
        </Workspace>
        <TransportBar />
      </Window>
    </>
  );
}
